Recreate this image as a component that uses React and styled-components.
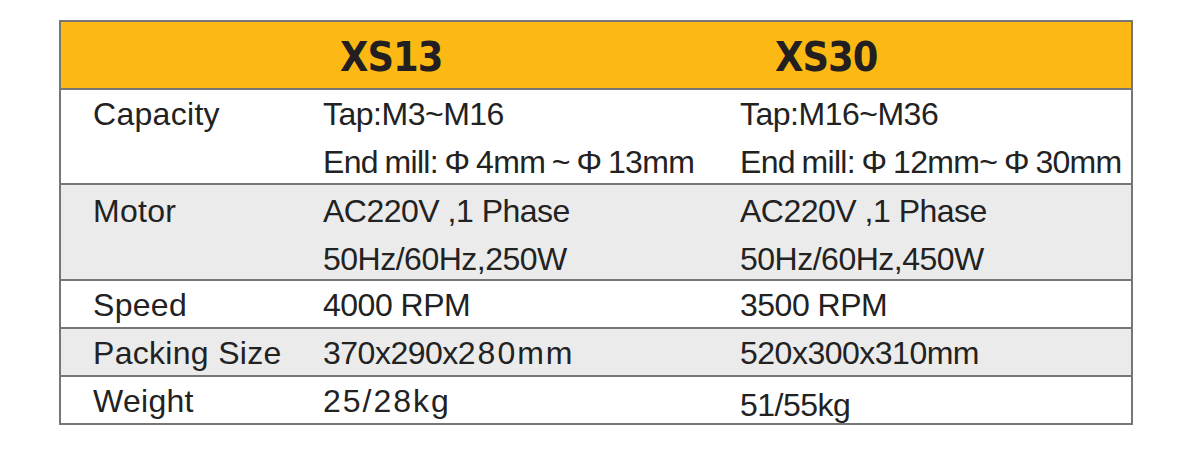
import React from 'react';
import styled, { createGlobalStyle } from 'styled-components';

const GlobalStyle = createGlobalStyle`
  html, body {
    margin: 0;
    padding: 0;
    background: #fff;
  }
  body {
    font-family: 'Liberation Sans', Arial, sans-serif;
  }
`;

const Page = styled.div`
  width: 1179px;
  height: 468px;
  padding: 20px 0 0 59px;
  box-sizing: border-box;
`;

const Table = styled.div`
  width: 1074px;
  border: 2px solid #767676;
  box-sizing: border-box;
  display: flex;
  flex-direction: column;
`;

const Row = styled.div`
  display: grid;
  grid-template-columns: 262px 417px 1fr;
  height: ${(p) => p.$height}px;
  background: ${(p) => (p.$shade ? '#ebebeb' : '#fff')};
  border-bottom: 2px solid #767676;
  box-sizing: border-box;
  color: #222;
  font-size: 32px;
  line-height: 48px;
  padding-top: ${(p) => p.$offset || 0}px;

  &:last-child {
    border-bottom: none;
  }
`;

const HeaderRow = styled.div`
  display: grid;
  grid-template-columns: 262px 417px 1fr;
  height: 68px;
  background: #fdb913;
  border-bottom: 2px solid #767676;
  box-sizing: border-box;
`;

const ModelName = styled.div`
  grid-column: ${(p) => p.$col};
  padding-left: ${(p) => p.$indent}px;
  font-family: 'DejaVu Sans Condensed', 'DejaVu Sans', sans-serif;
  font-weight: bold;
  font-size: 41px;
  line-height: 70px;
  color: #231f20;
  letter-spacing: -1px;
`;

const Label = styled.div`
  padding-left: 32px;
  white-space: nowrap;
  letter-spacing: 0.3px;
`;

const Cell = styled.div`
  white-space: nowrap;
  letter-spacing: -0.5px;
  padding-top: ${(p) => p.$shift || 0}px;
`;

const Line = styled.div`
  word-spacing: ${(p) => (p.$tight ? '-1.5px' : 'normal')};
  letter-spacing: ${(p) => (p.$tight ? '-0.7px' : 'inherit')};
`;

const Spaced = styled.span`
  letter-spacing: 2px;
`;

const App = () => {
  return (
    <>
      <GlobalStyle />
      <Page>
        <Table>
          <HeaderRow>
            <ModelName $col={2} $indent={17}>XS13</ModelName>
            <ModelName $col={3} $indent={35}>XS30</ModelName>
          </HeaderRow>

          <Row $height={95}>
            <Label>Capacity</Label>
            <Cell>
              <Line>Tap:M3~M16</Line>
              <Line $tight>End mill: Φ 4mm ~ Φ 13mm</Line>
            </Cell>
            <Cell>
              <Line>Tap:M16~M36</Line>
              <Line $tight>End mill: Φ 12mm~ Φ 30mm</Line>
            </Cell>
          </Row>

          <Row $height={96} $shade $offset={2}>
            <Label>Motor</Label>
            <Cell>
              <Line>AC220V ,1 Phase</Line>
              <Line>50Hz/60Hz,250W</Line>
            </Cell>
            <Cell>
              <Line>AC220V ,1 Phase</Line>
              <Line>50Hz/60Hz,450W</Line>
            </Cell>
          </Row>

          <Row $height={48}>
            <Label>Speed</Label>
            <Cell>4000 RPM</Cell>
            <Cell>3500 RPM</Cell>
          </Row>

          <Row $height={48} $shade>
            <Label>Packing Size</Label>
            <Cell>
              370x290x<Spaced>280mm</Spaced>
            </Cell>
            <Cell>520x300x310mm</Cell>
          </Row>

          <Row $height={46}>
            <Label>Weight</Label>
            <Cell $shift={-2}>
              <Spaced>25/28kg</Spaced>
            </Cell>
            <Cell $shift={4}>51/55kg</Cell>
          </Row>
        </Table>
      </Page>
    </>
  );
};

export default App;
